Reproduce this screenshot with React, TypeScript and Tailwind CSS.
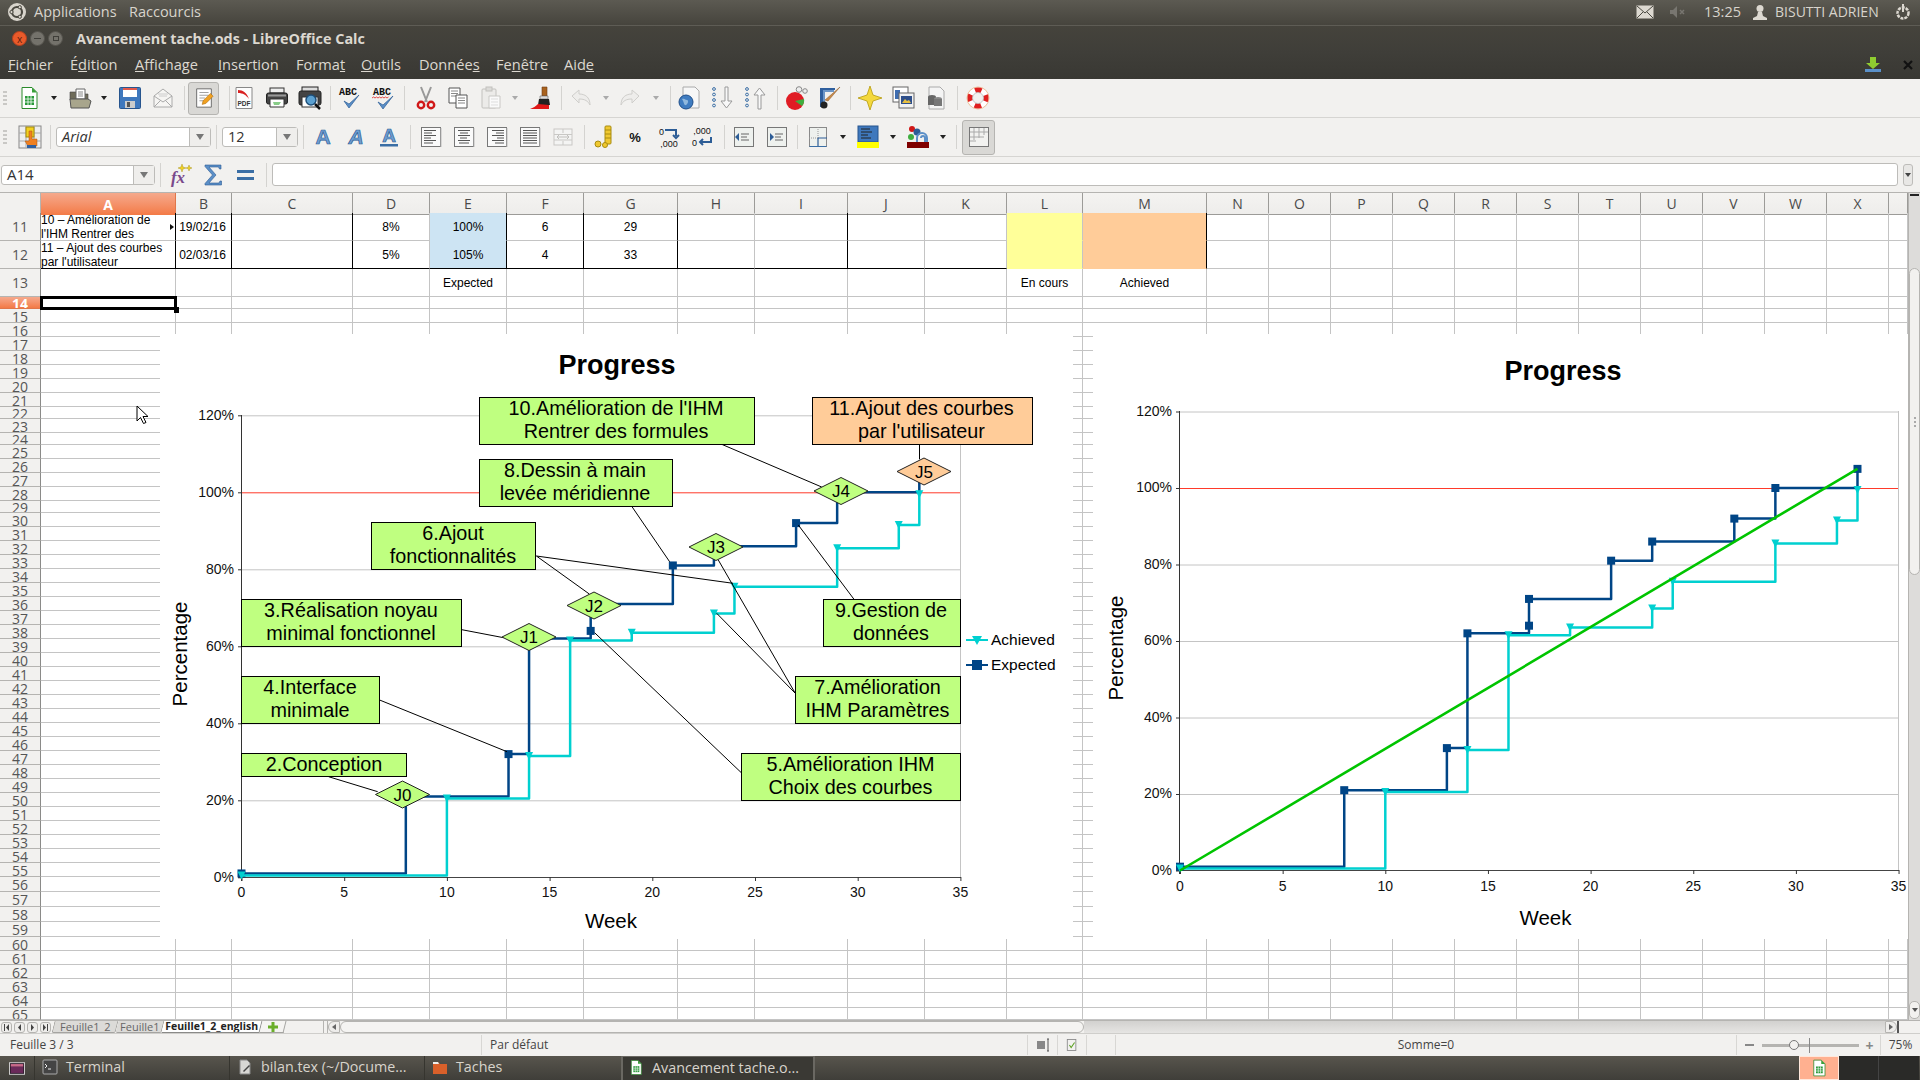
import React from "react";

const Ic = ({ ml, children }: { ml: string; children: React.ReactNode }) => (
  <svg viewBox="0 0 24 24" className={`w-[24px] h-[24px] shrink-0 ${ml}`}>{children}</svg>
);
const Arrow = ({ ml, faded }: { ml: string; faded?: boolean }) => (
  <svg viewBox="0 0 8 24" className={`w-[8px] h-[24px] shrink-0 ${ml}`}><path d="M1 10h6l-3 4z" fill={faded ? "#aaa" : "#222"} /></svg>
);
const Sep = ({ ml }: { ml: string }) => <div className={`w-px h-[24px] bg-[#d4d3d0] shrink-0 ${ml}`} />;
const Grip = () => (
  <div className="ml-[3px] w-[4px] flex flex-col gap-[2px] shrink-0">
    <div className="h-[2px] bg-[#c9c8c5]" /><div className="h-[2px] bg-[#c9c8c5]" /><div className="h-[2px] bg-[#c9c8c5]" /><div className="h-[2px] bg-[#c9c8c5]" />
  </div>
);
const Lines = ({ l }: { l: number[][] }) => (
  <>
    <rect x="2.5" y="2.5" width="19" height="19" fill="#fafafa" stroke="#777" />
    <rect x="21.5" y="3" width="1" height="19" fill="#bbb" />
    {l.map(([a, b], i) => <rect key={i} x={a} y={5 + i * 2.5} width={b} height="1" fill="#555" />)}
  </>
);
const DocCalc = () => (
  <g>
    <path d="M5 1.5h10l5 5v16H5z" fill="#fff" stroke="#2a8a2a" />
    <path d="M15 1.5l5 5h-5z" fill="#39a039" />
    <path d="M8 10h9v9H8z" fill="#2a9a3a" />
    <path d="M8 13h9M8 16h9M11 10v9M14 10v9" stroke="#fff" strokeWidth=".8" />
  </g>
);
const Dots = ({ x }: { x: number }) => (
  <g fill="none" stroke="#3a6ea5" strokeWidth="1">
    {[3, 8.5, 14, 19.5].map((y) => <circle key={y} cx={x} cy={y} r="1.4" />)}
  </g>
);

const H = "font-['Open_Sans',sans-serif]";
const L = "font-['Liberation_Sans',sans-serif]";

const Toolbar1 = () => (
  <div className="h-[39px] bg-[#f2f1ef] border-b border-[#d6d5d2] flex items-center">
    <Grip />
    <Ic ml="ml-[10px]"><DocCalc /></Ic>
    <Arrow ml="ml-[9px]" />
    <Ic ml="ml-[10px]"><path d="M2 6h7l2 2h9v6H2z" fill="#6f6c5a" stroke="#444" strokeWidth=".6" /><path d="M8 3h9v10H8z" fill="#fff" stroke="#666" /><path d="M10 6h5M10 8h5M10 10h5" stroke="#888" /><path d="M2 13h18l3 2-2 7H3z" fill="#a8a58c" stroke="#555" /></Ic>
    <Arrow ml="ml-[8px]" />
    <Ic ml="ml-[10px]"><rect x="1.5" y="1.5" width="21" height="21" rx="1" fill="#3f78bd" stroke="#27558e" /><rect x="5" y="2" width="14" height="9" fill="#fff" /><rect x="5" y="2" width="14" height="2" fill="#e25a4d" /><rect x="7" y="15" width="10" height="7" fill="#ccc" /><rect x="9" y="16" width="3" height="5" fill="#555" /></Ic>
    <Ic ml="ml-[9px]"><path d="M3 10l9-7 9 7v11H3z" fill="#f6f5f3" stroke="#aaa" /><path d="M3 10l9 6 9-6M3 21l7-7M21 21l-7-7" fill="none" stroke="#aaa" /><path d="M7 8h10M8 10h8" stroke="#ccc" /></Ic>
    <Sep ml="ml-[9px]" />
    <div className="ml-[3px] w-[31px] h-[33px] rounded-[3px] bg-[#d9d8d5] border border-[#b5b4b1] flex items-center justify-center shrink-0">
      <svg viewBox="0 0 24 24" className="w-[22px] h-[24px]"><path d="M4 2h16v20H4z" fill="#fff" stroke="#666" /><path d="M7 6h10M7 9h10M7 12h6M7 15h5" stroke="#999" /><path d="M10 19l1-4 8-8 3 3-8 8z" fill="#f0a020" stroke="#a86a10" strokeWidth=".6" /></svg>
    </div>
    <Sep ml="ml-[10px]" />
    <Ic ml="ml-[2px]"><path d="M4 1.5h16v21H4z" fill="#fdfdfd" stroke="#888" /><path d="M6 4c5 0 9 3 11 9-3-4-6-6-11-6z" fill="#d92020" /><text x="12" y="20" fontSize="6.5" fontWeight="700" textAnchor="middle" fill="#333" className={L}>PDF</text></Ic>
    <Ic ml="ml-[9px]"><rect x="5" y="2" width="14" height="5" fill="#eee" stroke="#333" /><rect x="1.5" y="7" width="21" height="11" rx="2" fill="#444" stroke="#222" /><rect x="3" y="8.5" width="18" height="2" fill="#999" /><path d="M5 13h14v8H5z" fill="#fff" stroke="#333" /><path d="M8 16h8l-2 3h-5z" fill="#8c8" /></Ic>
    <Ic ml="ml-[9px]"><rect x="4" y="1" width="16" height="5" fill="#ddd" stroke="#222" /><rect x="1" y="5" width="22" height="14" rx="2" fill="#444" stroke="#222" /><rect x="4" y="11" width="16" height="10" fill="#fff" stroke="#333" /><circle cx="13" cy="14" r="5" fill="#5ba0d0" stroke="#1d4f7a" strokeWidth="1.5" /><path d="M17 18l5 5" stroke="#111" strokeWidth="2.5" /></Ic>
    <Sep ml="ml-[8px]" />
    <Ic ml="ml-[6px]"><text x="11" y="9" fontSize="10" fontWeight="700" textAnchor="middle" fill="#111" className="font-['Liberation_Mono',monospace]">ABC</text><path d="M7 15l5 7 10-13-10 9z" fill="#5b8fc7" stroke="#2d5d96" strokeWidth=".7" /></Ic>
    <Ic ml="ml-[10px]"><text x="11" y="9" fontSize="10" fontWeight="700" textAnchor="middle" fill="#111" className="font-['Liberation_Mono',monospace]">ABC</text><path d="M1 12l1.5-1 1.5 1 1.5-1 1.5 1 1.5-1 1.5 1 1.5-1 1.5 1 1.5-1 1.5 1 1.5-1" fill="none" stroke="#d22" strokeWidth=".8" /><path d="M7 16l5 7 10-13-10 9z" fill="#5b8fc7" stroke="#2d5d96" strokeWidth=".7" /></Ic>
    <Sep ml="ml-[9px]" />
    <Ic ml="ml-[9px]"><path d="M7 1l6 15M17 1l-6 15" stroke="#999" strokeWidth="2" /><circle cx="7" cy="19" r="3.2" fill="none" stroke="#d01818" strokeWidth="2.4" /><circle cx="17" cy="19" r="3.2" fill="none" stroke="#d01818" strokeWidth="2.4" /></Ic>
    <Ic ml="ml-[8px]"><path d="M3 2h11v15H3z" fill="#fff" stroke="#555" /><path d="M5 5h7M5 7.5h7M5 10h7" stroke="#888" /><path d="M10 9h11v13H10z" fill="#fff" stroke="#555" /><path d="M12 12h7M12 14.5h7M12 17h7" stroke="#888" /></Ic>
    <Ic ml="ml-[9px]"><rect x="3" y="3" width="14" height="19" rx="1" fill="#ecebe9" stroke="#c2c1be" /><rect x="7" y="1" width="6" height="4" fill="#dcdbd8" stroke="#c2c1be" /><path d="M10 10h11v12H10z" fill="#fafafa" stroke="#c9c8c5" /><path d="M12 13h7M12 16h7M12 19h7" stroke="#ddd" /></Ic>
    <Arrow ml="ml-[8px]" faded />
    <Ic ml="ml-[10px]"><path d="M13 1h5v9h-5z" fill="#a8621e" stroke="#6e3e10" strokeWidth=".6" /><path d="M11 10h8v3h-8z" fill="#ddd" stroke="#666" strokeWidth=".6" /><path d="M10 13h10l1 6H9z" fill="#222" /><path d="M1 23c3-1 6-3 8-5l11 1v4z" fill="#e01818" /></Ic>
    <Sep ml="ml-[8px]" />
    <Ic ml="ml-[7px]"><path d="M3 10l7-6v4c6 0 11 3 11 11-2-4-5-6-11-6v4z" fill="#eeedeb" stroke="#cfcecb" /></Ic>
    <Arrow ml="ml-[9px]" faded />
    <Ic ml="ml-[8px]"><path d="M21 10l-7-6v4C8 8 3 11 3 19c2-4 5-6 11-6v4z" fill="#eeedeb" stroke="#cfcecb" /></Ic>
    <Arrow ml="ml-[10px]" faded />
    <Sep ml="ml-[10px]" />
    <Ic ml="ml-[6px]"><path d="M6 1h12l4 4v17H6z" fill="#f7f7f7" stroke="#aaa" /><circle cx="9" cy="16" r="7" fill="#3f7cc0" stroke="#1f4f8a" /><path d="M5 13c3-1 3 1 5 1s1 4-1 5-2-3-4-6z" fill="#8fb8dd" /></Ic>
    <Ic ml="ml-[10px]"><Dots x={3} /><path d="M14 1h3v14h4l-5.5 7L10 15h4z" fill="#f8f8f8" stroke="#999" /></Ic>
    <Ic ml="ml-[9px]"><Dots x={3} /><path d="M14 23h3V9h4l-5.5-7L10 9h4z" fill="#f8f8f8" stroke="#999" /></Ic>
    <Sep ml="ml-[9px]" />
    <Ic ml="ml-[6px]"><circle cx="11" cy="15" r="9" fill="#e01c24" /><path d="M11 15l9-2c.5 2 0 5-2 7z" fill="#3fae3f" /><circle cx="15" cy="3.5" r="2.8" fill="#eee" stroke="#888" /><circle cx="21" cy="5" r="2.3" fill="#eee" stroke="#888" /></Ic>
    <Ic ml="ml-[10px]"><path d="M2 2h15v2H5v17H2z" fill="#2f5f9e" /><path d="M5 4h11v2H7v12H5z" fill="#6c96c8" /><path d="M22 1L10 15l-3-1z" fill="#c88a4a" stroke="#8a5a2a" strokeWidth=".5" /><circle cx="6" cy="19" r="3.5" fill="#222" /></Ic>
    <Sep ml="ml-[8px]" />
    <Ic ml="ml-[7px]"><path d="M12 0l3 9 9 3-9 3-3 9-3-9-9-3 9-3z" fill="#f4d83c" stroke="#b59a10" strokeWidth=".8" /></Ic>
    <Ic ml="ml-[9px]"><rect x="2" y="1" width="15" height="15" fill="#fff" stroke="#666" /><rect x="4" y="4" width="5" height="9" fill="#3f6db0" /><rect x="8" y="7" width="15" height="15" fill="#f2f2f2" stroke="#666" /><rect x="10" y="10" width="11" height="8" fill="#2f4f8a" /><path d="M11 17l3-4 2 2 2-1 2 3z" fill="#e8c040" /></Ic>
    <Ic ml="ml-[9px]"><path d="M5 1h11l4 4v18H5z" fill="#f4f4f4" stroke="#aaa" /><ellipse cx="8" cy="11" rx="4" ry="2" fill="#666" /><rect x="4" y="11" width="8" height="8" fill="#666" /><ellipse cx="14" cy="13" rx="4" ry="2" fill="#888" /><rect x="10" y="13" width="8" height="7" fill="#777" /></Ic>
    <Sep ml="ml-[9px]" />
    <Ic ml="ml-[8px]"><circle cx="12" cy="12" r="11" fill="#fff" stroke="#e8b080" strokeWidth=".8" /><circle cx="12" cy="12" r="8" fill="none" stroke="#e02020" strokeWidth="5" strokeDasharray="6.5 6.07" strokeDashoffset="3.2" /><circle cx="12" cy="12" r="5.5" fill="#f2f1ef" stroke="#aaa" strokeWidth=".6" /></Ic>
  </div>
);

const Align = ({ ml, l }: { ml: string; l: number[][] }) => <Ic ml={ml}><Lines l={l} /></Ic>;

const Toolbar2 = () => (
  <div className="h-[39px] bg-[#f2f1ef] border-b border-[#d6d5d2] flex items-center">
    <Grip />
    <Ic ml="ml-[11px]"><rect x="1" y="1" width="22" height="22" fill="#eee" stroke="#888" /><path d="M8 1v22M16 1v22M1 8h22M1 16h22" stroke="#aaa" /><rect x="8" y="2" width="8" height="10" fill="#f4d020" stroke="#a08a10" /><path d="M11 6h3v8h5v7h-9l-3-5h4z" fill="#f08020" stroke="#a85510" strokeWidth=".5" /><rect x="9" y="20" width="9" height="3" fill="#3060a0" /></Ic>
    <Sep ml="ml-[8px]" />
    <div className={`ml-[5px] w-[155px] h-[20px] bg-white rounded-[3px] border border-[#bdbcb9] flex items-center shrink-0 ${H}`}>
      <span className="flex-1 pl-[5px] text-[14.5px] italic text-[#333]">Arial</span>
      <div className="w-[21px] h-full bg-[#efeeec] border-l border-[#bdbcb9] flex items-center justify-center"><svg viewBox="0 0 8 6" className="w-[8px] h-[6px]"><path d="M0 0h8L4 6z" fill="#777" /></svg></div>
    </div>
    <Sep ml="ml-[5px]" />
    <div className={`ml-[5px] w-[76px] h-[20px] bg-white rounded-[3px] border border-[#bdbcb9] flex items-center shrink-0 ${H}`}>
      <span className="flex-1 pl-[5px] text-[14.5px] text-[#333]">12</span>
      <div className="w-[21px] h-full bg-[#efeeec] border-l border-[#bdbcb9] flex items-center justify-center"><svg viewBox="0 0 8 6" className="w-[8px] h-[6px]"><path d="M0 0h8L4 6z" fill="#777" /></svg></div>
    </div>
    <Sep ml="ml-[5px]" />
    <Ic ml="ml-[7px]"><text x="12" y="19" fontSize="21" fontWeight="700" textAnchor="middle" fill="#6f9fd2" stroke="#2d5d96" strokeWidth=".7" className={L}>A</text></Ic>
    <Ic ml="ml-[9px]"><text x="12" y="19" fontSize="21" fontWeight="700" fontStyle="italic" textAnchor="middle" fill="#6f9fd2" stroke="#2d5d96" strokeWidth=".7" className={L}>A</text></Ic>
    <Ic ml="ml-[9px]"><text x="12" y="17" fontSize="19" fontWeight="700" textAnchor="middle" fill="#6f9fd2" stroke="#2d5d96" strokeWidth=".7" className={L}>A</text><rect x="3" y="19" width="18" height="2.5" fill="#3a6ea5" /></Ic>
    <Sep ml="ml-[9px]" />
    <Align ml="ml-[8px]" l={[[5, 12], [5, 8], [5, 12], [5, 7], [5, 12], [5, 9]]} />
    <Align ml="ml-[9px]" l={[[6, 12], [8, 8], [6, 12], [8, 7], [6, 12], [7, 10]]} />
    <Align ml="ml-[9px]" l={[[7, 12], [11, 8], [7, 12], [12, 7], [7, 12], [10, 9]]} />
    <Align ml="ml-[9px]" l={[[5, 14], [5, 14], [5, 14], [5, 14], [5, 14], [5, 14]]} />
    <Ic ml="ml-[9px]"><rect x="3" y="4" width="18" height="16" fill="#f4f4f3" stroke="#c9c8c5" /><path d="M3 9.5h18M3 15h18M12 4v4M12 16v4" stroke="#c9c8c5" /><path d="M6 12h12M6 12l2-2M6 12l2 2M18 12l-2-2M18 12l-2 2" stroke="#c0bfbc" fill="none" /></Ic>
    <Sep ml="ml-[9px]" />
    <Ic ml="ml-[7px]"><rect x="13" y="1" width="6" height="18" rx="1" fill="#f0c830" stroke="#a88c10" /><path d="M13 5h6M13 9h6M13 13h6" stroke="#a88c10" /><circle cx="6" cy="19" r="3" fill="#f0c830" stroke="#a88c10" /><circle cx="13" cy="20" r="2.5" fill="#f0c830" stroke="#a88c10" /></Ic>
    <Ic ml="ml-[7px]"><text x="12" y="17" fontSize="13" fontWeight="700" textAnchor="middle" fill="#111" className={L}>%</text></Ic>
    <Ic ml="ml-[10px]"><text x="2" y="10" fontSize="9" fill="#111" className={L}>0</text><path d="M8 5h11v6m-3-1l3 3 3-3" fill="none" stroke="#2d5d96" strokeWidth="2" /><text x="12" y="22" fontSize="9" textAnchor="middle" fill="#111" className={L}>,000</text></Ic>
    <Ic ml="ml-[9px]"><text x="12" y="9" fontSize="9" textAnchor="middle" fill="#111" className={L}>,000</text><text x="2" y="21" fontSize="9" fill="#111" className={L}>0</text><path d="M21 12v5H10m3-3l-3 3 3 3" fill="none" stroke="#2d5d96" strokeWidth="2" /></Ic>
    <Sep ml="ml-[10px]" />
    <Ic ml="ml-[7px]"><rect x="2.5" y="2.5" width="19" height="19" fill="#eef1ee" stroke="#777" /><path d="M9 9h8M9 12h6M9 15h8" stroke="#666" /><path d="M7 8v8L3 12z" fill="#2d5d96" /></Ic>
    <Ic ml="ml-[9px]"><rect x="2.5" y="2.5" width="19" height="19" fill="#eef1ee" stroke="#777" /><path d="M10 9h8M10 12h6M10 15h8" stroke="#666" /><path d="M5 8v8l4-4z" fill="#2d5d96" /></Ic>
    <Sep ml="ml-[8px]" />
    <Ic ml="ml-[8px]"><rect x="3.5" y="2.5" width="17" height="19" fill="#eef1ee" stroke="#8a8a8a" /><path d="M12 2v11M3 13h9" stroke="#999" strokeDasharray="1 1" /><path d="M12 13v9M12 13h9" stroke="#2d5d96" strokeWidth="1.2" /><path d="M3.5 21.5h17" stroke="#3a6ea5" strokeWidth="1" /></Ic>
    <Arrow ml="ml-[9px]" />
    <Ic ml="ml-[9px]"><rect x="2" y="1" width="20" height="16" fill="#3f78bd" stroke="#27558e" /><path d="M5 4h9M5 7h11M5 10h7M5 13h10" stroke="#222" /><rect x="1" y="17" width="22" height="6" fill="#ffff00" /></Ic>
    <Arrow ml="ml-[9px]" />
    <Ic ml="ml-[9px]"><circle cx="6" cy="4" r="3" fill="#d01818" /><circle cx="5" cy="12" r="3" fill="#3fae3f" /><circle cx="11" cy="7" r="3.5" fill="#2d5d96" /><path d="M11 17v-4a5 5 0 0 1 10 0v4M15 13a2 2 0 0 1 4 0v4" fill="none" stroke="#5b8fc7" strokeWidth="2" /><rect x="1" y="17" width="22" height="6" fill="#7f0000" /></Ic>
    <Arrow ml="ml-[9px]" />
    <Sep ml="ml-[9px]" />
    <div className="ml-[5px] w-[33px] h-[35px] rounded-[3px] bg-[#d9d8d5] border border-[#b5b4b1] flex items-center justify-center shrink-0">
      <svg viewBox="0 0 24 24" className="w-[24px] h-[24px]"><rect x="2.5" y="2.5" width="19" height="19" fill="#f2f2f0" stroke="#777" /><path d="M7 3v12M12 3v10M17 3v7M3 7h18M3 12h14M3 16h6" stroke="#aaa" /></svg>
    </div>
  </div>
);

const FormulaBar = () => (
  <div className={`h-[35px] bg-[#f2f1ef] flex items-center ${H}`}>
    <div className="ml-px w-[154px] h-[20px] bg-white rounded-[3px] border border-[#bdbcb9] flex items-center shrink-0">
      <span className="flex-1 pl-[5px] text-[15px] text-[#333]">A14</span>
      <div className="w-[21px] h-full bg-[#efeeec] border-l border-[#bdbcb9] flex items-center justify-center"><svg viewBox="0 0 8 6" className="w-[8px] h-[6px]"><path d="M0 0h8L4 6z" fill="#777" /></svg></div>
    </div>
    <Sep ml="ml-[5px]" />
    <Ic ml="ml-[7px]"><text x="10" y="20" fontSize="17" fontWeight="700" fontStyle="italic" textAnchor="middle" fill="#7a4a8c" className="font-['Liberation_Serif',serif]">fx</text><path d="M14 1l1 3 3 1-3 1-1 3-1-3-3-1 3-1zM21 2l.8 2.2 2.2.8-2.2.8-.8 2.2-.8-2.2-2.2-.8 2.2-.8z" fill="#f0d020" stroke="#a08a10" strokeWidth=".4" /></Ic>
    <Ic ml="ml-[9px]"><path d="M4 2h16v4h-1.500l-1-2H8l7 8-7 8h10l1-2h1.500v4H4v-1.500L11.500 12 4 3.500z" fill="#5b8fc7" stroke="#2d5d96" strokeWidth=".6" /></Ic>
    <Ic ml="ml-[9px]"><rect x="3" y="7" width="17" height="3" fill="#3a6ea5" /><rect x="3" y="14" width="17" height="3" fill="#3a6ea5" /></Ic>
    <Sep ml="ml-[8px]" />
    <div className="ml-[5px] w-[1626px] h-[23px] bg-white rounded-[3px] border border-[#bdbcb9] shrink-0" />
    <div className="ml-[5px] w-[10px] h-[22px] bg-[#e8e7e5] rounded-[3px] border border-[#bdbcb9] flex items-center justify-center shrink-0"><svg viewBox="0 0 6 4" className="w-[6px] h-[4px]"><path d="M0 0h6L3 4z" fill="#444" /></svg></div>
  </div>
);

const colLabels = ["A", "B", "C", "D", "E", "F", "G", "H", "I", "J", "K", "L", "M", "N", "O", "P", "Q", "R", "S", "T", "U", "V", "W", "X", ""];
const gridCols = "grid grid-cols-[41px_135px_56px_121px_77px_77px_77px_94px_77px_93px_77px_82px_76px_124px_62px_62px_62px_62px_62px_62px_62px_62px_62px_62px_62px_19px]";

const rowDefs: [number, string][] = [];
const heights: Record<number, string> = {
  11: "h-[28px]", 12: "h-[28px]", 13: "h-[28px]", 14: "h-[12px]", 22: "h-[12px]", 24: "h-[12px]", 29: "h-[12px]",
  56: "h-[15px]", 57: "h-[15px]", 58: "h-[15px]", 59: "h-[15px]", 64: "h-[15px]", 65: "h-[12px]",
};
for (let n = 11; n <= 65; n++) rowDefs.push([n, heights[n] || "h-[14px]"]);

const blackRight = [0, 1, 2, 4, 5, 6, 8, 12];

const cellData: Record<number, Record<number, string>> = {
  11: { 1: "19/02/16", 3: "8%", 4: "100%", 5: "6", 6: "29" },
  12: { 1: "02/03/16", 3: "5%", 4: "105%", 5: "4", 6: "33" },
  13: { 4: "Expected", 11: "En cours", 12: "Achieved" },
};

const Sheet = () => (
  <div className="relative h-[828px] flex border-t border-[#b5b4b1] overflow-hidden">
    <div className="w-[1908px] h-full overflow-hidden bg-white">
      <div className={`${gridCols} h-[20px] bg-[#f2f1ef]`}>
        <div className="border-r border-b border-[#b5b4b1]" />
        {colLabels.map((c, i) => (
          <div key={i} className={`flex items-center justify-center text-[14px] border-r ${H} ${c === "A" ? "bg-linear-to-b from-[#f5a98c] to-[#f37a45] text-white font-bold border-[#e0764a]" : "text-[#4a4a4a] bg-linear-to-b from-[#f4f3f1] to-[#eeedeb] border-b border-[#9c9b98]"}`}>{c}</div>
        ))}
      </div>
      {rowDefs.map(([n, h]) => {
        const t = cellData[n];
        return (
          <div key={n} className={`${gridCols} ${h}`}>
            <div className={`${H} flex items-center justify-center text-[14px] overflow-hidden border-r border-b leading-none ${n >= 14 ? "pt-[2px]" : ""} ${n === 14 ? "bg-linear-to-b from-[#f5a98c] to-[#f37a45] text-white font-bold border-[#e0764a]" : "bg-[#f2f1ef] text-[#555] border-r-[#8a8a88] border-b-[#b5b4b1]"}`}>{n}</div>
            {colLabels.map((_, i) => {
              const tbl = n === 11 || n === 12;
              let bg = "";
              if (tbl && i === 4) bg = "bg-[#cde4f3]";
              if (tbl && i === 11) bg = "bg-[#ffff99]";
              if (tbl && i === 12) bg = "bg-[#ffcc99]";
              const r = tbl && blackRight.includes(i) ? "border-r-black" : "border-r-[#c4c4c4]";
              const b = n === 12 && i <= 10 ? "border-b-black" : tbl && i >= 11 && i <= 12 ? "border-b-transparent" : tbl && i === 4 ? "border-b-transparent" : "border-b-[#c4c4c4]";
              return (
                <div key={i} className={`relative border-r border-b overflow-hidden ${r} ${b} ${bg} ${L} text-[12px] leading-[14px] text-black flex items-center justify-center ${i === 1 ? "pr-[2px]" : ""}`}>
                  {tbl && i === 0 ? (
                    <span className="w-full pt-[1px]">{n === 11 ? <>10 – Amélioration de<br />l'IHM Rentrer des</> : <>11 – Ajout des courbes<br />par l'utilisateur</>}</span>
                  ) : (t && t[i]) || null}
                  {n === 11 && i === 0 && <svg viewBox="0 0 4 6" className="absolute right-[1px] top-[11px] w-[4px] h-[6px]"><path d="M0 0l4 3-4 3z" fill="#111" /></svg>}
                </div>
              );
            })}
          </div>
        );
      })}
    </div>
    {/* vertical scrollbar */}
    <div className="w-[12px] h-full bg-[#dddcda] border-l border-[#b5b4b1] flex flex-col items-center">
      <div className="w-[9px] h-[2px] bg-[#222] mt-[1px]" />
      <div className="mt-[72px] w-[11px] h-[307px] bg-[#f2f1ef] border border-[#b5b4b1] rounded-b-[6px] rounded-t-[6px] flex flex-col items-center justify-center gap-[2px]">
        <div className="w-[2px] h-[2px] bg-[#aaa]" /><div className="w-[2px] h-[2px] bg-[#aaa]" /><div className="w-[2px] h-[2px] bg-[#aaa]" />
      </div>
      <div className="mt-auto mb-[1px] w-[11px] h-[18px] bg-[#f2f1ef] border border-[#b5b4b1] rounded-[5px] flex items-center justify-center"><svg viewBox="0 0 6 4" className="w-[6px] h-[4px]"><path d="M0 0h6L3 4z" fill="#555" /></svg></div>
    </div>
    {/* selection */}
    <div className="absolute left-[40px] top-[103px] w-[137px] h-[14px] border-[3px] border-black pointer-events-none" />
    <div className="absolute left-[174px] top-[114px] w-[5px] h-[6px] bg-black" />
    {/* chart 1 */}
    <div className="absolute left-[160px] top-[141px] w-[913px] h-[605px] bg-white">
      <Chart1 />
    </div>
    {/* chart 2 */}
    <div className="absolute left-[1093px] top-[141px] w-[815px] h-[605px] bg-white">
      <Chart2 />
    </div>
    {/* cursor */}
    <svg viewBox="0 0 12 19" className="absolute left-[136px] top-[212px] w-[12px] h-[19px]"><path d="M1 1v15l3.500-3.500 3 6 2.500-1-3-6h5z" fill="#fff" stroke="#000" /></svg>
  </div>
);

const exp: [number, number][] = [[0, 1], [8, 21], [13, 32], [14, 62], [17, 64], [17, 71], [21, 81], [23, 86], [27, 92], [29, 100], [33, 105]];
const ach: [number, number][] = [[0, .5], [10, 20.5], [14, 31.5], [16, 61.5], [19, 63.5], [23, 68.5], [24, 75.5], [29, 85.5], [32, 91.5], [33, 99.5]];

function stepPath(d: [number, number][], X: (v: number) => number, Y: (v: number) => number) {
  let p = `M${X(d[0][0])} ${Y(d[0][1])}`;
  for (let i = 1; i < d.length; i++) p += `H${X(d[i][0])}V${Y(d[i][1])}`;
  return p;
}

const Axes = ({ X, Y, x0, x35, y0, y120, tickX, tickY, labelX }: any) => (
  <g className={L}>
    {[20, 40, 60, 80, 120].map((p) => <path key={p} d={`M${x0} ${Y(p) + .5}H${x35}`} stroke="#c4c4c4" />)}
    <path d={`M${x35 + .5} ${y120}V${y0}`} stroke="#c4c4c4" />
    <path d={`M${x0} ${Y(100) + .5}H${x35}`} stroke="#ff3a2a" />
    <path d={`M${x0 - .5} ${y120}V${y0 + 4}`} stroke="#333" />
    <path d={`M${x0 - 4} ${y0 + .5}H${x35 + 1}`} stroke="#444" />
    {[0, 20, 40, 60, 80, 100, 120].map((p) => (
      <g key={p}>
        <path d={`M${x0 - 4} ${Y(p) + .5}H${x0}`} stroke="#333" />
        <text x={labelX} y={tickY(p)} fontSize="14" textAnchor="end" fill="#111">{p}%</text>
      </g>
    ))}
    {[0, 5, 10, 15, 20, 25, 30, 35].map((w) => (
      <g key={w}>
        <path d={`M${X(w) + .5} ${y0}v4`} stroke="#333" />
        <text x={X(w)} y={tickX} fontSize="14" textAnchor="middle" fill="#111">{w}</text>
      </g>
    ))}
  </g>
);

const Series = ({ X, Y }: any) => (
  <g>
    <path d={stepPath(exp, X, Y)} fill="none" stroke="#004586" strokeWidth="2.5" strokeLinejoin="round" />
    {exp.map(([a, b], i) => <rect key={i} x={X(a) - 4} y={Y(b) - 4} width="8" height="8" fill="#004586" />)}
    <path d={stepPath(ach, X, Y)} fill="none" stroke="#00d0d0" strokeWidth="2.5" strokeLinejoin="round" />
    {ach.map(([a, b], i) => <path key={i} d={`M${X(a) - 4} ${Y(b) - 4}h8l-4 8z`} fill="#00d0d0" />)}
  </g>
);

const Box = ({ x1, x2, y1, y2, c, a, b, f = "#bfff80" }: any) => (
  <g>
    <rect x={x1} y={y1} width={x2 - x1} height={y2 - y1} fill={f} stroke="#000" />
    <text x={c} y={y1 + 17} fontSize="19.8" textAnchor="middle" fill="#000">{a}</text>
    {b && <text x={c} y={y1 + 40} fontSize="19.8" textAnchor="middle" fill="#000">{b}</text>}
  </g>
);
const Dia = ({ cx, cy, t, f = "#bfff80" }: any) => (
  <g>
    <path d={`M${cx - 27} ${cy}L${cx} ${cy - 13.5}L${cx + 27} ${cy}L${cx} ${cy + 13.5}z`} fill={f} stroke="#222" />
    <text x={cx} y={cy + 6} fontSize="17" textAnchor="middle" fill="#000">{t}</text>
  </g>
);

function Chart1() {
  const X = (w: number) => 241.5 + 20.54 * w;
  const Y = (p: number) => 877.3 - 3.85 * p;
  const conn = [
    [721.7, 444.3, 821.7, 487], [919.5, 444.3, 919.5, 459.3], [632, 506.7, 669.6, 561.7], [536.4, 556, 589.3, 594],
    [536.4, 556, 733, 583.3], [461.8, 629.7, 503.6, 637.7], [379.6, 700, 507, 751.7], [328.6, 776.7, 377.7, 791.7],
    [741.3, 772.7, 594.6, 632.7], [795.3, 693.3, 718.3, 560], [795.3, 693.3, 716.7, 613.3], [854, 599.3, 798.3, 525],
  ];
  return (
    <svg viewBox="160 334 913 605" className={`w-[913px] h-[605px] ${L}`}>
      <text x="617" y="374" fontSize="27" fontWeight="700" textAnchor="middle" fill="#000">Progress</text>
      <Axes X={X} Y={Y} x0={242} x35={960} y0={877} y120={415} tickX={897} tickY={(p: number) => Y(p) + 5} labelX={234} />
      <text transform="translate(187 654) rotate(-90)" fontSize="20.5" textAnchor="middle" fill="#000">Percentage</text>
      <text x="611" y="928" fontSize="20.5" textAnchor="middle" fill="#000">Week</text>
      <Series X={X} Y={Y} />
      {conn.map((c, i) => <line key={i} x1={c[0]} y1={c[1]} x2={c[2]} y2={c[3]} stroke="#000" strokeWidth="1" />)}
      <Box x1={479.5} x2={754.5} y1={397.5} y2={444.5} c={616} a="10.Amélioration de l'IHM" b="Rentrer des formules" />
      <Box x1={812.5} x2={1032.5} y1={397.5} y2={444.5} c={921.5} a="11.Ajout des courbes" b="par l'utilisateur" f="#ffcc99" />
      <Box x1={479.5} x2={672.5} y1={459.5} y2={506.5} c={575} a="8.Dessin à main" b="levée méridienne" />
      <Box x1={371.5} x2={535.5} y1={522.5} y2={569.5} c={453} a="6.Ajout" b="fonctionnalités" />
      <Box x1={241.5} x2={461.5} y1={599.5} y2={646.5} c={351} a="3.Réalisation noyau" b="minimal fonctionnel" />
      <Box x1={241.5} x2={379.5} y1={676.5} y2={723.5} c={310} a="4.Interface" b="minimale" />
      <Box x1={241.5} x2={406.5} y1={753.5} y2={776.5} c={324} a="2.Conception" />
      <Box x1={823.5} x2={960.5} y1={599.5} y2={646.5} c={891} a="9.Gestion de" b="données" />
      <Box x1={795.5} x2={960.5} y1={676.5} y2={723.5} c={877.5} a="7.Amélioration" b="IHM Paramètres" />
      <Box x1={741.5} x2={960.5} y1={753.5} y2={800.5} c={850.5} a="5.Amélioration IHM" b="Choix des courbes" />
      <Dia cx={402.5} cy={794.5} t="J0" />
      <Dia cx={529} cy={637} t="J1" />
      <Dia cx={594} cy={605.5} t="J2" />
      <Dia cx={716} cy={547} t="J3" />
      <Dia cx={841} cy={491} t="J4" />
      <Dia cx={924} cy={471.5} t="J5" f="#ffcc99" />
      <path d="M966 640h22" stroke="#00d0d0" strokeWidth="2" /><path d="M972 636h10l-5 9z" fill="#00d0d0" />
      <text x="991" y="644.5" fontSize="15.5" fill="#000">Achieved</text>
      <path d="M966 665h22" stroke="#004586" strokeWidth="2" /><rect x="972" y="660" width="10" height="10" fill="#004586" />
      <text x="991" y="669.5" fontSize="15.5" fill="#000">Expected</text>
    </svg>
  );
}

function Chart2() {
  const X = (w: number) => 1180 + 20.53 * w;
  const Y = (p: number) => 870.5 - 3.825 * p;
  return (
    <svg viewBox="1093 334 815 605" className={`w-[815px] h-[605px] ${L}`}>
      <text x="1563" y="380" fontSize="27" fontWeight="700" textAnchor="middle" fill="#000">Progress</text>
      <Axes X={X} Y={Y} x0={1180} x35={1898} y0={870} y120={411} tickX={891} tickY={(p: number) => Y(p) + 4} labelX={1172} />
      <text transform="translate(1123 648) rotate(-90)" fontSize="20.5" textAnchor="middle" fill="#000">Percentage</text>
      <text x="1545.5" y="925" fontSize="20.5" textAnchor="middle" fill="#000">Week</text>
      <Series X={X} Y={Y} />
      <line x1={X(0)} y1={Y(0)} x2={X(33)} y2={Y(105)} stroke="#00c400" strokeWidth="2.6" />
    </svg>
  );
}

const Nav = ({ d }: { d: string }) => (
  <div className="w-[11px] h-[11px] mr-[2px] rounded-[3px] bg-[#eeedeb] border border-[#b5b4b1] flex items-center justify-center shrink-0">
    <svg viewBox="0 0 7 7" className="w-[7px] h-[7px]"><path d={d} fill="#444" /></svg>
  </div>
);

const TabsBar = () => (
  <div className={`h-[13px] bg-[#f2f1ef] border-t border-[#b5b4b1] flex items-stretch ${H}`}>
    <div className="ml-px flex items-center w-[52px] shrink-0">
      <Nav d="M1 0h1v7H1zM6 0v7L3 3.500z" /><Nav d="M5 0v7L2 3.500z" /><Nav d="M2 0v7l3-3.500z" /><Nav d="M6 0h-1v7h1zM1 0v7l3-3.500z" />
    </div>
    <div className="w-[64px] shrink-0 border-x border-b border-[#a5a4a1] bg-[#dcdbd8] rounded-b-[2px] -skew-x-[14deg] flex items-center justify-center overflow-hidden"><span className="skew-x-[14deg] text-[11px] leading-none text-[#666]">Feuille1_2</span></div>
    <div className="w-[46px] shrink-0 border-r border-b border-[#a5a4a1] bg-[#dcdbd8] rounded-b-[2px] -skew-x-[14deg] flex items-center justify-center overflow-hidden"><span className="skew-x-[14deg] text-[11px] leading-none text-[#666]">Feuille1</span></div>
    <div className="w-[98px] shrink-0 border-r border-b border-[#8a8a88] bg-white -skew-x-[14deg] flex items-center justify-center overflow-hidden"><span className="skew-x-[14deg] text-[10.5px] font-bold leading-none text-[#222]">Feuille1_2_english</span></div>
    <div className="w-[24px] shrink-0 border-r border-b border-[#a5a4a1] bg-[#f5f4f2] -skew-x-[14deg] flex items-center justify-center"><svg viewBox="0 0 10 10" className="skew-x-[14deg] w-[10px] h-[10px]"><path d="M3.500 0h3v3.500H10v3H6.500V10h-3V6.500H0v-3h3.500z" fill="#6aae2a" /></svg></div>
    <div className="w-[38px] shrink-0" />
    <div className="w-[5px] shrink-0 border-x border-[#b5b4b1]" />
    <div className="w-[12px] shrink-0 bg-[#eeedeb] rounded-l-[6px] border border-[#b5b4b1] flex items-center justify-center"><svg viewBox="0 0 4 6" className="w-[4px] h-[6px]"><path d="M4 0v6L0 3z" fill="#666" /></svg></div>
    <div className="w-[744px] shrink-0 bg-[#f5f4f2] border border-[#b5b4b1] rounded-[6px]" />
    <div className="w-[801px] shrink-0 bg-linear-to-b from-[#d2d1cf] to-[#e6e5e3]" />
    <div className="w-[12px] shrink-0 bg-[#eeedeb] border border-[#b5b4b1] rounded-r-[6px] flex items-center justify-center"><svg viewBox="0 0 4 6" className="w-[4px] h-[6px]"><path d="M0 0v6l4-3z" fill="#666" /></svg></div>
    <div className="flex-1 border-l-2 border-[#555]" />
  </div>
);

const StatusBar = () => {
  const sep = "w-px h-[20px] bg-[#d8d7d4] shrink-0";
  return (
    <div className={`h-[23px] bg-[#f2f1ef] border-t border-[#cfcecb] flex items-center text-[12px] text-[#444] ${H}`}>
      <span className="ml-[10px] w-[471px] shrink-0">Feuille 3 / 3</span>
      <div className={sep} />
      <span className="ml-[8px] w-[537px] shrink-0">Par défaut</span>
      <div className={sep} />
      <div className="w-[29px] flex items-center justify-center shrink-0"><svg viewBox="0 0 14 14" className="w-[14px] h-[14px]"><rect x="1" y="3" width="8" height="8" fill="#888" /><path d="M11 1h2M12 1v12M11 13h2" stroke="#555" fill="none" /></svg></div>
      <div className={sep} />
      <div className="w-[28px] flex items-center justify-center shrink-0"><svg viewBox="0 0 14 16" className="w-[12px] h-[16px]"><rect x="1.5" y="1.5" width="10" height="13" fill="#f2f1ef" stroke="#888" /><path d="M4 8l2 3 4-6" fill="none" stroke="#5aa020" strokeWidth="1.2" /></svg></div>
      <div className={sep} />
      <div className="w-[28px] shrink-0" />
      <div className={sep} />
      <div className="w-[620px] text-center shrink-0">Somme=0</div>
      <div className={sep} />
      <div className="w-[25px] flex items-center justify-center shrink-0"><div className="w-[9px] h-[2px] bg-[#888]" /></div>
      <div className="relative w-[97px] h-[3px] bg-[#b5b4b1] shrink-0">
        <div className="absolute left-[27px] top-[-4px] w-[10px] h-[10px] rounded-full bg-[#f2f1ef] border border-[#777]" />
        <div className="absolute left-[47px] top-[-6px] w-[1px] h-[15px] bg-[#888]" />
      </div>
      <div className="w-[21px] text-center text-[14px] font-bold text-[#888] shrink-0">+</div>
      <div className={sep} />
      <div className="flex-1 text-center">75%</div>
    </div>
  );
};

const TaskBar = () => {
  const sep = "w-px h-full bg-[#36352f] shrink-0";
  return (
    <div className={`h-[24px] pb-0 bg-linear-to-b from-[#58554d] to-[#3f3e39] flex items-stretch text-[14.3px] text-[#d8d4cc] ${H}`}>
      <div className="w-[34px] flex items-center justify-center shrink-0">
        <svg viewBox="0 0 18 14" className="w-[16px] h-[13px]"><rect x=".5" y=".5" width="17" height="13" fill="#2a1a2a" stroke="#ddd" /><rect x="2" y="2" width="14" height="3" fill="#c86a8a" /><rect x="2" y="5" width="14" height="7" fill="#6a2a5a" /></svg>
      </div>
      <div className={sep} />
      <div className="w-[194px] flex items-center pb-[2px] shrink-0">
        <svg viewBox="0 0 16 16" className="ml-[7px] w-[16px] h-[16px]"><rect x="1" y="1" width="14" height="14" rx="1" fill="#444" stroke="#aaa" /><path d="M3 5l2 2-2 2M6 10h3" stroke="#eee" fill="none" /></svg>
        <span className="ml-[8px]">Terminal</span>
      </div>
      <div className={sep} />
      <div className="w-[194px] flex items-center pb-[2px] shrink-0">
        <svg viewBox="0 0 16 16" className="ml-[7px] w-[16px] h-[16px]"><path d="M3 1h7l3 3v11H3z" fill="#d8d7d4" stroke="#888" /><path d="M6 12l6-6 1 1-6 6z" fill="#444" /></svg>
        <span className="ml-[8px]">bilan.tex (~/Docume...</span>
      </div>
      <div className={sep} />
      <div className="w-[196px] flex items-center pb-[2px] shrink-0">
        <svg viewBox="0 0 16 16" className="ml-[7px] w-[16px] h-[16px]"><path d="M1 3h5l2 2h7v10H1z" fill="#d9602a" /><path d="M1 3h5l1 2H1z" fill="#eee" /></svg>
        <span className="ml-[8px]">Taches</span>
      </div>
      <div className="w-[194px] flex items-center pb-[2px] shrink-0 bg-[#3a3934] border-x-2 border-t border-[#6a6862]">
        <svg viewBox="0 0 24 24" className="ml-[5px] w-[16px] h-[17px]"><DocCalc /></svg>
        <span className="ml-[8px]">Avancement tache.o...</span>
      </div>
      <div className="w-[984px] shrink-0" />
      <div className="w-[40px] bg-[#ffb090] border border-[#ffe8dc] flex items-center justify-center shrink-0">
        <svg viewBox="0 0 24 24" className="w-[18px] h-[20px]"><DocCalc /></svg>
      </div>
      <div className="w-[40px] bg-[#2a2a28] border-r border-[#444] shrink-0" />
      <div className="w-[40px] bg-[#2a2a28] shrink-0" />
      <div className="flex-1" />
    </div>
  );
};

const menu: [string, string, string, string, string][] = [
  ["", "F", "ichier", "w-[62px]", "ml-[8px]"],
  ["É", "d", "ition", "w-[65px]", ""],
  ["", "A", "ffichage", "w-[83px]", ""],
  ["", "I", "nsertion", "w-[78px]", ""],
  ["Forma", "t", "", "w-[65px]", ""],
  ["", "O", "utils", "w-[58px]", ""],
  ["Donnée", "s", "", "w-[77px]", ""],
  ["Fe", "n", "être", "w-[68px]", ""],
  ["Aid", "e", "", "w-[40px]", ""],
];

export default function App() {
  return (
    <div className={`w-[1920px] h-[1080px] overflow-hidden relative bg-[#f2f1ef] flex flex-col ${H}`}>
      {/* panel */}
      <div className="h-[26px] pb-[2px] bg-linear-to-b from-[#5c5a52] to-[#46443d] border-b border-[#5e5c55] flex items-center text-[14.5px] text-[#d8d4cc]">
        <svg viewBox="0 0 20 20" className="ml-[7px] w-[20px] h-[20px]"><circle cx="10" cy="10" r="9" fill="#d8d4cc" /><circle cx="10" cy="10" r="5" fill="none" stroke="#4a4840" strokeWidth="2.2" /><circle cx="4.5" cy="10" r="1.6" fill="#d8d4cc" stroke="#4a4840" /><circle cx="12.8" cy="5.2" r="1.6" fill="#d8d4cc" stroke="#4a4840" /><circle cx="12.8" cy="14.800" r="1.6" fill="#d8d4cc" stroke="#4a4840" /></svg>
        <span className="ml-[7px] w-[95px]">Applications</span>
        <span>Raccourcis</span>
        <div className="ml-auto flex items-center">
          <svg viewBox="0 0 18 14" className="w-[18px] h-[14px]"><rect x=".5" y=".5" width="17" height="13" fill="#dcd8d0" /><path d="M1 1l8 7 8-7M1 13l6-6M17 13l-6-6" fill="none" stroke="#4a4840" /></svg>
          <svg viewBox="0 0 18 14" className="ml-[15px] w-[18px] h-[14px]"><path d="M1 5h3l4-4v12l-4-4H1z" fill="#787670" /><path d="M11 5l4 4M15 5l-4 4" stroke="#787670" strokeWidth="1.5" /></svg>
          <span className="ml-[17px] w-[49px]">13:25</span>
          <svg viewBox="0 0 14 16" className="w-[14px] h-[16px]"><circle cx="7" cy="4.5" r="3.5" fill="#dcd8d0" /><path d="M5 8h4l1 4 4 2v2H0v-2l4-2z" fill="#dcd8d0" /></svg>
          <span className="ml-[8px] w-[119px] text-[14px]">BISUTTI ADRIEN</span>
          <svg viewBox="0 0 18 18" className="mr-[8px] w-[18px] h-[18px]"><circle cx="9" cy="10" r="5.5" fill="none" stroke="#dcd8d0" strokeWidth="2.5" strokeDasharray="3 1" /><path d="M9 1v8" stroke="#dcd8d0" strokeWidth="2" /></svg>
        </div>
      </div>
      {/* title */}
      <div className="h-[27px] pb-[2px] bg-linear-to-b from-[#45433c] to-[#3f3e39] flex items-center">
        <div className="ml-[12px] w-[15px] h-[15px] rounded-full bg-[#e95a2a] flex items-center justify-center text-[10px] leading-none text-[#5a2010] border border-[#b04020]">x</div>
        <div className="ml-[3px] w-[15px] h-[15px] rounded-full bg-[#74726b] flex items-center justify-center border border-[#55534d]"><div className="w-[7px] h-px bg-[#3f3e39]" /></div>
        <div className="ml-[3px] w-[15px] h-[15px] rounded-full bg-[#74726b] flex items-center justify-center border border-[#55534d]"><div className="w-[6px] h-[5px] border border-[#3f3e39]" /></div>
        <span className="ml-[13px] text-[14.4px] font-bold text-[#dcd8d0]">Avancement tache.ods - LibreOffice Calc</span>
      </div>
      {/* menu */}
      <div className="h-[26px] pb-[2px] bg-linear-to-b from-[#3f3e39] to-[#393833] flex items-center text-[14.6px] text-[#dcd8d0]">
        {menu.map(([a, u, b, w, ml], i) => (
          <span key={i} className={`${w} ${ml} shrink-0`}>{a}<span className="underline">{u}</span>{b}</span>
        ))}
        <div className="ml-auto flex items-center">
          <svg viewBox="0 0 18 16" className="w-[18px] h-[16px]"><path d="M6 0h6v6h4l-7 6-7-6h4z" fill="#8fcc30" /><rect x="1" y="12" width="16" height="3" fill="#5a90c8" /></svg>
          <svg viewBox="0 0 10 10" className="ml-[21px] mr-[7px] w-[10px] h-[10px]"><path d="M1 1l8 8M9 1l-8 8" stroke="#111" strokeWidth="2.2" /></svg>
        </div>
      </div>
      <Toolbar1 />
      <Toolbar2 />
      <FormulaBar />
      <Sheet />
      <TabsBar />
      <StatusBar />
      <TaskBar />
    </div>
  );
}
